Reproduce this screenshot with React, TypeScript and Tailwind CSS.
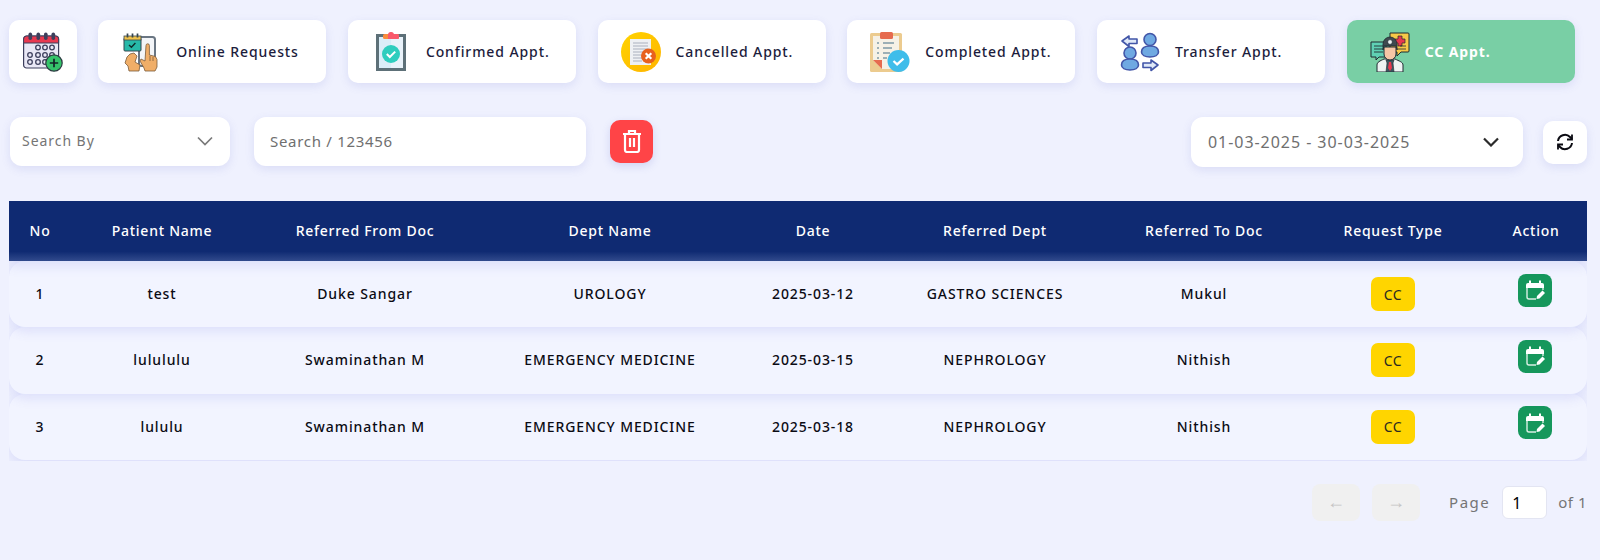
import React from "react";

const font = { fontFamily: '"Noto Sans", sans-serif' };

function CalendarPlus() {
  return (
    <svg width="40" height="40" viewBox="0 0 40 40">
      <rect x="0.600" y="4" width="35" height="32" rx="3" fill="#e9e8f5" stroke="#3d3f5c" strokeWidth="1.200" />
      <path d="M0.600 11V7a3 3 0 0 1 3-3h29a3 3 0 0 1 3 3v4z" fill="#e8384f" stroke="#3d3f5c" strokeWidth="1" />
      {[5.5, 13.5, 21, 28.5].map((x) => (
        <rect key={x} x={x} y="0.500" width="3.600" height="7.500" rx="1.800" fill="#3d3f5c" />
      ))}
      {[[15, 15.5], [22, 15.5], [29, 15.5], [7, 23], [15, 23], [22, 23], [29, 23], [7, 30], [15, 30], [22, 30]].map(([x, y]) => (
        <circle key={`${x}-${y}`} cx={x} cy={y} r="2.300" fill="none" stroke="#3d3f5c" strokeWidth="1.300" />
      ))}
      <circle cx="31" cy="31" r="8.200" fill="#35c46a" stroke="#2d3a42" strokeWidth="1.200" />
      <path d="M31 26.800v8.400M26.800 31h8.400" stroke="#14242a" strokeWidth="1.700" />
    </svg>
  );
}

function OnlineReq() {
  return (
    <svg width="40" height="40" viewBox="0 0 40 40">
      <rect x="18" y="5" width="16" height="29" rx="2.500" fill="#f3f5f8" stroke="#6a7683" strokeWidth="2" />
      <rect x="3" y="6" width="17" height="13" rx="1" fill="#27b9a9" stroke="#37474f" strokeWidth="1" />
      <rect x="3" y="4" width="17" height="4" fill="#f0c24a" stroke="#37474f" strokeWidth="0.800" />
      <path d="M6.500 1.500v4M11.500 1.500v4M16.500 1.500v4" stroke="#37474f" strokeWidth="1.700" />
      <path d="M8 13l2.400 2.200 4-4.200" fill="none" stroke="#102a2a" strokeWidth="1.400" />
      <path d="M9 22l4-1 3 3-2 6 5 3-1 6H8l-1-5-3-3 2-6z" fill="#f0ae68" stroke="#7a5a3a" strokeWidth="0.800" />
      <path d="M25 13.500a1.700 1.700 0 0 1 3.400 0V23l6 1.500 1.600 3V35l-2 4H24l-1-3-4-7 1-2 4 2z" fill="#f0ae68" stroke="#7a5a3a" strokeWidth="0.800" />
      <path d="M29 24v5M32 25v4" stroke="#7a5a3a" strokeWidth="0.800" />
    </svg>
  );
}

function Confirmed() {
  return (
    <svg width="40" height="40" viewBox="0 0 40 40">
      <rect x="5" y="2" width="30" height="37" fill="#5d7078" />
      <rect x="8" y="5" width="24" height="31" fill="#dbedf8" />
      <rect x="20" y="5" width="12" height="31" fill="#e9f2fa" />
      <rect x="12" y="2" width="16" height="5" rx="1.500" fill="#fb8c3c" />
      <path d="M20 0a3 3 0 0 1 3 2v5h-6V2a3 3 0 0 1 3-2z" fill="#f9596b" />
      <rect x="20" y="2" width="8" height="5" rx="1.500" fill="#f9596b" />
      <circle cx="20" cy="22" r="9" fill="#2fcdbe" />
      <path d="M15.800 22l3 3 5.400-5.400" fill="none" stroke="#fff" strokeWidth="2" />
    </svg>
  );
}

function Cancelled() {
  return (
    <svg width="40" height="40" viewBox="0 0 40 40">
      <defs>
        <linearGradient id="cg" x1="0" y1="0" x2="1" y2="1">
          <stop offset="0" stopColor="#ffd400" />
          <stop offset="1" stopColor="#ffb300" />
        </linearGradient>
      </defs>
      <circle cx="20" cy="20" r="20" fill="url(#cg)" />
      <rect x="9" y="7" width="21" height="26" fill="#eef0f4" />
      <path d="M12 11h15M12 14h15M12 17h15M12 20h12M12 23h10M12 26h9M12 29h9" stroke="#a9afbd" strokeWidth="1.100" />
      <circle cx="27.500" cy="24" r="7.500" fill="#e8611d" />
      <path d="M24.700 21.200l5.600 5.600M30.300 21.200l-5.600 5.600" stroke="#fff" strokeWidth="2.200" />
    </svg>
  );
}

function Completed() {
  return (
    <svg width="40" height="40" viewBox="0 0 40 40">
      <rect x="0" y="1" width="32" height="39" rx="1.500" fill="#eccb8f" />
      <path d="M3 4h26v33H12L3 28z" fill="#f6f1e6" />
      <path d="M3 28h9v9z" fill="#e66b4f" />
      <rect x="10" y="0" width="13" height="7" rx="1.500" fill="#e66b4f" />
      <path d="M13 11h11M13 16h9M13 21h7M13 26h4" stroke="#7f99a6" strokeWidth="1.700" />
      <path d="M7 11h2M7 16h2M7 21h2M7 26h2" stroke="#7f99a6" strokeWidth="1.700" />
      <circle cx="28.500" cy="29" r="11" fill="#3fbdea" />
      <path d="M23.500 29l3.600 3.400 6.400-5.800" fill="none" stroke="#fff" strokeWidth="2.200" />
    </svg>
  );
}

function Transfer() {
  return (
    <svg width="40" height="40" viewBox="0 0 40 40">
      <g fill="#6fa9e2" stroke="#4256a8" strokeWidth="1.600">
        <circle cx="30" cy="7.500" r="6" />
        <path d="M21.500 20c0-4 3.500-6 8.500-6s8.500 2 8.500 6c0 3-3.500 5-8.500 5s-8.500-2-8.500-5z" />
        <circle cx="10" cy="21" r="6" />
        <path d="M1.500 33c0-4 3.500-6 8.500-6s8.500 2 8.500 6c0 3-3.500 5-8.500 5s-8.500-2-8.500-5z" />
      </g>
      <g fill="#dfe9f8" stroke="#4256a8" strokeWidth="1.600" strokeLinejoin="round">
        <path d="M2 9l7-5v3h8v4.500H9v3z" />
        <path d="M38 33l-7-5v3h-8v4.500h8v3z" />
      </g>
    </svg>
  );
}

function CcDoctor() {
  return (
    <svg width="40" height="40" viewBox="0 0 40 40">
      <path d="M20 1h18a1 1 0 0 1 1 1v17a1 1 0 0 1-1 1H31l-4 4v-4h-7z" fill="#f7c948" stroke="#1f2a30" strokeWidth="1" />
      <path d="M28 4h4v3h3v4h-3v3h-4v-3h-3V7h3z" fill="#e8384f" stroke="#1f2a30" strokeWidth="0.700" />
      <path d="M27 17h9M30 14h6" stroke="#1f2a30" strokeWidth="0.800" />
      <path d="M1 10h15v15H9l-3 3v-3H1z" fill="#5fd0b4" stroke="#1f2a30" strokeWidth="1" />
      <path d="M4 14h9M4 17h9M4 20h9" stroke="#1f2a30" strokeWidth="0.900" />
      <path d="M7 40v-7c0-3 3-4 7-6h11c4 2 8 3 8 6v7z" fill="#eef3f3" stroke="#1f2a30" strokeWidth="1" />
      <path d="M16 28h8l-1 3 1 9h-8l1-9z" fill="#3d5560" stroke="#1f2a30" strokeWidth="0.600" />
      <path d="M19 30h2l1 6-2 3-2-3z" fill="#e8384f" />
      <path d="M14 15h12v7a6 6 0 0 1-12 0z" fill="#f6c6a6" stroke="#1f2a30" strokeWidth="1" />
      <path d="M13 18v-6a7 7 0 0 1 14 0v6l-1-4H14z" fill="#3f4a50" stroke="#1f2a30" strokeWidth="0.800" />
      <circle cx="20" cy="10" r="2.400" fill="#eef3f3" stroke="#1f2a30" strokeWidth="0.700" />
    </svg>
  );
}

function Trash() {
  return (
    <svg width="20" height="24" viewBox="0 0 20 24" fill="none" stroke="#fff" strokeWidth="2.200">
      <path d="M1 5h18M7 4V2h6v2" />
      <path d="M3 5v16a2 2 0 0 0 2 2h10a2 2 0 0 0 2-2V5" />
      <path d="M8 9v9M12 9v9" />
    </svg>
  );
}

function Refresh() {
  return (
    <svg width="18" height="18" viewBox="0 0 18 18" fill="none" stroke="#0b0b12" strokeWidth="2">
      <path d="M2 8a7 7 0 0 1 12-4l2 2" />
      <path d="M16 1.500V6.500h-5" strokeWidth="1.800" />
      <path d="M16 10a7 7 0 0 1-12 4l-2-2" />
      <path d="M2 16.500V11.500h5" strokeWidth="1.800" />
    </svg>
  );
}

function ActionIcon() {
  return (
    <svg width="22" height="22" viewBox="0 0 22 22">
      <path d="M2 6a2 2 0 0 1 2-2h14a2 2 0 0 1 2 2v3H2z" fill="#fff" />
      <path d="M6 1.500v4M16 1.500v4" stroke="#fff" strokeWidth="2" />
      <path d="M3 9v9a2 2 0 0 0 2 2h7M19 9v2" fill="none" stroke="#d9efe4" strokeWidth="1.400" />
      <path d="M12.500 20l.5-3 5.500-5.500 2.500 2.500-5.500 5.500z" fill="#fff" />
    </svg>
  );
}

const tabs: { label: string; icon: React.ReactNode; active?: boolean }[] = [
  { label: "Online Requests", icon: <OnlineReq /> },
  { label: "Confirmed Appt.", icon: <Confirmed /> },
  { label: "Cancelled Appt.", icon: <Cancelled /> },
  { label: "Completed Appt.", icon: <Completed /> },
  { label: "Transfer Appt.", icon: <Transfer /> },
  { label: "CC Appt.", icon: <CcDoctor />, active: true },
];

const columns = ["No", "Patient Name", "Referred From Doc", "Dept Name", "Date", "Referred Dept", "Referred To Doc", "Request Type", "Action"];

const rows = [
  { z: "z-30", cells: ["1", "test", "Duke Sangar", "UROLOGY", "2025-03-12", "GASTRO SCIENCES", "Mukul"] },
  { z: "z-20", cells: ["2", "lulululu", "Swaminathan M", "EMERGENCY MEDICINE", "2025-03-15", "NEPHROLOGY", "Nithish"] },
  { z: "z-10", cells: ["3", "lululu", "Swaminathan M", "EMERGENCY MEDICINE", "2025-03-18", "NEPHROLOGY", "Nithish"] },
];

const grid = "grid grid-cols-[62px_182px_224px_266px_140px_224px_194px_184px_102px] items-center text-center";

export default function App() {
  return (
    <div style={font} className="min-h-[560px] bg-[#eff1fe] pl-[9px] pr-[13px] pt-[20px] text-[14px]">
      <div className="flex h-[63px] items-stretch gap-[21.7px] tracking-[0.9px]">
        <button className="flex w-[67.5px] items-center justify-center rounded-[10px] bg-white shadow-[0_3px_10px_rgba(90,100,200,0.14)]">
          <CalendarPlus />
        </button>
        {tabs.map((t) => (
          <button
            key={t.label}
            className={`flex w-[228px] items-center gap-[15px] rounded-[10px] pl-[23px] shadow-[0_3px_10px_rgba(90,100,200,0.14)] ${t.active ? "bg-[#79cfa5] font-bold text-white" : "bg-white font-medium text-[#1c1c3c]"}`}
          >
            {t.icon}
            <span>{t.label}</span>
          </button>
        ))}
      </div>

      <div className="mt-[34px] flex h-[50px] items-center">
        <div className="mb-[2px] ml-[1px] flex h-[49px] w-[220px] items-center justify-between rounded-[12px] bg-white pl-[12px] pr-[17px] tracking-[0.95px] text-[#757575] shadow-[0_3px_10px_rgba(90,100,200,0.14)]">
          <span className="-mt-[2px]">Search By</span>
          <svg width="16" height="10" viewBox="0 0 16 10" fill="none" stroke="#7a7a7a" strokeWidth="1.700"><path d="M1 1.500l7 7 7-7" /></svg>
        </div>
        <div className="mb-[2px] ml-[24px] flex h-[49px] w-[332px] items-center rounded-[12px] bg-white pl-[16px] text-[15px] tracking-[0.7px] text-[#6f6f6f] shadow-[0_3px_10px_rgba(90,100,200,0.14)]">
          Search / 123456
        </div>
        <button className="mb-[2px] ml-[24px] flex h-[43px] w-[43px] items-center justify-center rounded-[10px] bg-[#ff4447] shadow-[0_3px_8px_rgba(90,100,200,0.2)]">
          <Trash />
        </button>
        <div className="ml-auto flex h-[50px] w-[332px] items-center justify-between rounded-[12px] bg-white pl-[17px] pr-[24px] text-[16px] tracking-[0.95px] text-[#6f6f6f] shadow-[0_3px_10px_rgba(90,100,200,0.14)]">
          <span>01-03-2025 - 30-03-2025</span>
          <svg width="16" height="10" viewBox="0 0 16 10" fill="none" stroke="#2b2b2b" strokeWidth="2.200"><path d="M1 1.500l7 7 7-7" /></svg>
        </div>
        <button className="ml-[20px] flex h-[43px] w-[44px] items-center justify-center rounded-[10px] bg-white shadow-[0_3px_10px_rgba(90,100,200,0.14)]">
          <Refresh />
        </button>
      </div>

      <div className="mt-[34px] h-[260px] overflow-hidden">
        <div className={`${grid} relative z-40 h-[60px] bg-[linear-gradient(#0f2a72_0,#0f2a72_84%,#314a8c_100%)] pb-[1px] font-medium tracking-[0.75px] text-white shadow-[0_4px_12px_rgba(95,100,220,0.16)]`}>
          {columns.map((c) => (
            <div key={c}>{c}</div>
          ))}
        </div>
        {rows.map((r) => (
          <div key={r.cells[0]} className={`${grid} relative ${r.z} h-[66.3px] rounded-[16px] bg-[#f2f4ff] font-medium tracking-[0.9px] text-[#0b0b14] shadow-[0_4px_12px_rgba(95,100,220,0.15)]`}>
            {r.cells.map((v, i) => (
              <div key={i} className="-mt-[1px]">{v}</div>
            ))}
            <div className="flex justify-center">
              <span className="flex h-[34px] w-[44px] items-center justify-center rounded-[7px] bg-[#ffd500] font-normal tracking-[0.5px] text-[#2a2a20]">CC</span>
            </div>
            <div className="flex justify-center">
              <span className="-mt-[8px] -ml-[3px] flex h-[33px] w-[34px] items-center justify-center rounded-[8px] bg-[#16975c]">
                <ActionIcon />
              </span>
            </div>
          </div>
        ))}
      </div>

      <div className="mt-[23px] flex items-center justify-end text-[#757575]">
        <button className="flex h-[37px] w-[48px] items-center justify-center rounded-[8px] bg-[#f0f0f0] text-[18px] text-[#c4c4c4] [font-family:'Liberation_Sans',sans-serif]">←</button>
        <button className="ml-[12px] flex h-[37px] w-[48px] items-center justify-center rounded-[8px] bg-[#f0f0f0] text-[18px] text-[#c4c4c4] [font-family:'Liberation_Sans',sans-serif]">→</button>
        <span className="ml-[29px] text-[15px] tracking-[1.5px]">Page</span>
        <div className="ml-[12px] flex h-[33px] w-[45px] items-center rounded-[6px] border border-[#e3e5f2] bg-white pl-[9px] text-[16px] text-black">1</div>
        <span className="ml-[11px] text-[15px] tracking-[0.5px]">of 1</span>
      </div>
    </div>
  );
}
